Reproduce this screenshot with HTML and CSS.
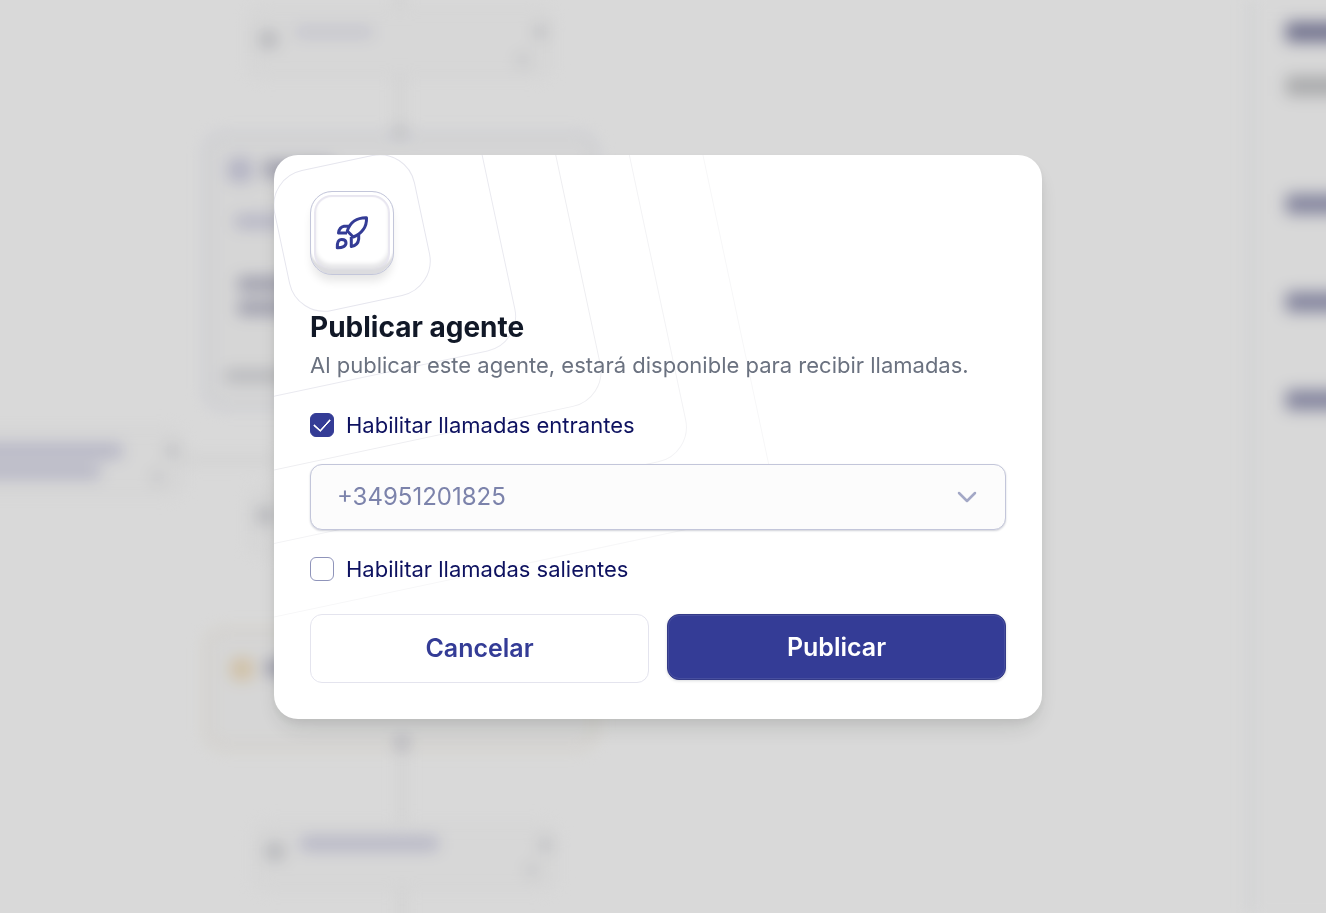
FILE: index.html
```
<!DOCTYPE html>
<html lang="es">

<head>
    <meta charset="UTF-8">
    <meta name="viewport" content="width=device-width, initial-scale=1.0">
    <title>Publicar agente</title>
    <link rel="stylesheet" href="styles.css">
</head>

<body>
    <div class="app" aria-hidden="true">
        <svg class="canvas" width="1250" height="913">
            <!-- connectors -->
            <g fill="none" stroke="#e9e9ea" stroke-width="3">
                <path d="M400 -20V8M400 78V135M402 748V824M402 890V940M180 460H280" />
            </g>
            <!-- small nodes -->
            <g fill="#fdfdfd" stroke="#f7f7f8" stroke-width="3">
                <rect x="250" y="8" width="300" height="68" rx="12" />
                <rect x="-100" y="430" width="282" height="64" rx="12" />
                <rect x="250" y="490" width="300" height="64" rx="12" />
                <rect x="255" y="825" width="300" height="64" rx="12" />
            </g>
            <!-- large nodes -->
            <rect x="208" y="137" width="386" height="268" rx="14" fill="#fcfcfc" stroke="#f0f1f7" stroke-width="8" />
            <rect x="208" y="632" width="386" height="114" rx="14" fill="#fcfcfc" stroke="#f9f6ef" stroke-width="8" />
            <!-- node contents -->
            <g fill="#d4d5da">
                <rect x="260" y="31" width="17" height="17" rx="4" />
                <rect x="257" y="507" width="17" height="17" rx="4" />
                <rect x="266" y="843" width="18" height="17" rx="4" />
                <circle cx="540" cy="32" r="6" />
                <circle cx="523" cy="60" r="5" />
                <circle cx="172" cy="451" r="6" />
                <circle cx="158" cy="477" r="5" />
                <circle cx="545" cy="845" r="6" />
                <circle cx="532" cy="870" r="5" />
                <circle cx="400" cy="132" r="6" />
                <rect x="225" y="370" width="70" height="12" />
            </g>
            <g fill="#d2d2e6">
                <rect x="295" y="27" width="78" height="10" opacity=".6" />
                <rect x="228" y="158" width="24" height="24" rx="5" />
                <rect x="235" y="215" width="70" height="13" />
                <rect x="-30" y="444" width="152" height="14" />
                <rect x="-30" y="465" width="130" height="13" />
                <rect x="301" y="837" width="137" height="13" />
            </g>
            <g fill="#b6b6c8">
                <rect x="264" y="161" width="70" height="17" />
                <rect x="238" y="277" width="70" height="14" />
                <rect x="238" y="301" width="70" height="14" />
                <rect x="266" y="660" width="70" height="16" />
                <circle cx="402" cy="743" r="6" />
            </g>
            <rect x="231" y="658" width="22" height="22" rx="5" fill="#f4e1c0" />
        </svg>
        <aside class="panel">
            <div class="panel-title"></div>
            <div class="panel-text"></div>
            <div class="panel-item"></div>
            <div class="panel-item"></div>
            <div class="panel-item"></div>
        </aside>
    </div>

    <div class="backdrop">
        <form class="modal" role="dialog" aria-labelledby="modal-title">
            <div class="modal-icon">
                <span class="ring ring-1"></span>
                <span class="ring ring-2"></span>
                <span class="ring ring-3"></span>
                <span class="ring ring-4"></span>
                <span class="ring ring-5"></span>
                <div class="key">
                    <svg width="36" height="36" viewBox="0 0 36 36" fill="none" stroke="#343c96" stroke-width="3" stroke-linejoin="round">
                        <path d="M32.500 2.800C23 2.500 16 7.500 13.300 16L19.300 22C27.500 19 33 12 32.500 2.800Z" />
                        <path d="M15 11.300H10C6.500 12 5 14.500 4.500 18H13" />
                        <path d="M24.700 19.500V24C24.200 28.500 22 30.800 17.300 31.500V22" />
                        <path d="M3.300 32.800C3 27.500 4.300 24.500 7.800 24.500C10.300 24.500 12 25.800 12 28C12 31 8.500 33 3.300 32.800Z" />
                    </svg>
                </div>
            </div>

            <h1 class="title" id="modal-title">Publicar agente</h1>
            <p class="subtitle">Al publicar este agente, estará disponible para recibir llamadas.</p>

            <label class="check">
                <input type="checkbox" checked>
                Habilitar llamadas entrantes
            </label>

            <div class="select-box">
                <select class="select" aria-label="Número de teléfono">
                    <option>+34951201825</option>
                </select>
                <svg class="chevron" width="20" height="12" viewBox="0 0 20 12" fill="none" stroke="#a3a8c6" stroke-width="2.500" stroke-linecap="round" stroke-linejoin="round">
                    <path d="M2 2L10 10L18 2" />
                </svg>
            </div>

            <label class="check">
                <input type="checkbox">
                Habilitar llamadas salientes
            </label>

            <div class="actions">
                <button type="button" class="btn btn-cancel">Cancelar</button>
                <button type="button" class="btn btn-publish">Publicar</button>
            </div>
        </form>
    </div>
</body>

</html>
```
FILE: styles.css
```
* {
    box-sizing: border-box;
}

body {
    margin: 0;
    font-family: Inter, "Liberation Sans", sans-serif;
    background-color: #fff;
    overflow: hidden;
}

/* page behind the dialog */
.app {
    display: flex;
    height: 100vh;
    margin-right: -40px;
    filter: blur(8px);
}

.canvas {
    flex: 1;
    min-width: 0;
    overflow: visible;
}

.panel {
    width: 118px;
    padding: 22px 0 0 34px;
    border-left: 4px solid #f0f2f6;
    background-color: #fefefe;
}

.panel-title,
.panel-item {
    height: 20px;
    margin-bottom: 78px;
    background-color: #9c9dba;
}

.panel-title {
    margin-bottom: 34px;
    background-color: #8788a8;
}

.panel-text {
    height: 20px;
    margin-bottom: 98px;
    background-color: #c8c9cb;
}

.backdrop {
    position: fixed;
    inset: 0;
    display: flex;
    justify-content: center;
    align-items: center;
    padding: 0 10px 40px 0;
    background-color: rgba(0, 0, 0, 0.15);
}

/* dialog */
.modal {
    position: relative;
    width: 768px;
    max-width: 100%;
    padding: 36px;
    border-radius: 24px;
    background-color: #fff;
    box-shadow: 0 12px 24px -4px rgba(16, 24, 20, 0.12), 0 4px 8px rgba(16, 24, 20, 0.06);
    overflow: hidden;
}

.modal-icon {
    display: grid;
    place-items: center;
    width: 84px;
    height: 84px;
    margin-bottom: 34px;
}

.key {
    position: relative;
    display: grid;
    place-items: center;
    width: 84px;
    height: 84px;
    border: 1px solid #c3c6da;
    border-radius: 22px;
    background-color: #fff;
    box-shadow: inset 0 -6px 2px -1px #dcdcdf, inset 0 0 0 3px #fff, inset 0 0 1px 5px #e8e6f0, inset 0 -6px 4px 4px #e6e6e8, 0 8px 10px -2px rgba(0, 0, 0, 0.1);
}

/* tilted squares spreading out from the icon */
.ring {
    position: absolute;
    top: 78px;
    left: 78px;
    border: 1px solid #e6e6ee;
    border-radius: 36px;
    transform: translate(-50%, -50%) rotate(-12deg);
}

.ring-1 {
    width: 144px;
    height: 144px;
}

.ring-2 {
    width: 288px;
    height: 288px;
    border-color: #eaeaf0;
}

.ring-3 {
    width: 432px;
    height: 432px;
    border-color: #eeeef1;
}

.ring-4 {
    width: 576px;
    height: 576px;
    border-color: #f3f3f5;
}

.ring-5 {
    width: 720px;
    height: 720px;
    border-color: #f7f7f8;
}

.title,
.subtitle,
.check,
.select-box,
.actions {
    position: relative;
}

.title {
    margin: 0;
    font-size: 28px;
    font-weight: 700;
    line-height: 36px;
    color: #111827;
}

.subtitle {
    margin: 2px 0 30px;
    font-size: 22px;
    line-height: 36px;
    color: #6b7280;
}

.check {
    display: flex;
    align-items: center;
    gap: 12px;
    width: fit-content;
    font-size: 22px;
    line-height: 24px;
    color: #0e1260;
}

.check input {
    appearance: none;
    display: grid;
    place-items: center;
    width: 24px;
    height: 24px;
    margin: 0;
    border: 1px solid #8f94ba;
    border-radius: 6px;
    background-color: #fff;
}

.check input:checked {
    border-color: #343c96;
    background-color: #343c96;
}

.check input:checked::after {
    content: "";
    width: 14px;
    height: 8px;
    border: solid #fff;
    border-width: 0 0 2px 2px;
    border-radius: 1px;
    transform: translateY(-2px) rotate(-48deg);
}

.select-box {
    margin: 27px 0;
}

.select {
    appearance: none;
    display: block;
    width: 100%;
    height: 66px;
    padding: 0 60px 0 26px;
    border: 1px solid #c3c6da;
    border-radius: 12px;
    background-color: #fcfcfc;
    box-shadow: 0 1px 2px rgba(16, 24, 60, 0.2);
    font-family: inherit;
    font-size: 24px;
    color: #7c83ab;
}

.chevron {
    position: absolute;
    top: 27px;
    right: 29px;
    pointer-events: none;
}

.actions {
    display: flex;
    align-items: flex-start;
    gap: 18px;
    margin-top: 33px;
}

.btn {
    flex: 1;
    height: 66px;
    border-radius: 12px;
    font-family: inherit;
    font-size: 25px;
    font-weight: 600;
    cursor: pointer;
}

.btn-cancel {
    height: 69px;
    border: 1px solid #e4e4ee;
    background-color: #fff;
    color: #343c96;
}

.btn-publish {
    border: 1px solid #343a87;
    background-color: #343c96;
    box-shadow: inset 0 0 0 1px #464e9f, 0 1px 3px rgba(16, 24, 40, 0.15);
    color: #fff;
}
```
